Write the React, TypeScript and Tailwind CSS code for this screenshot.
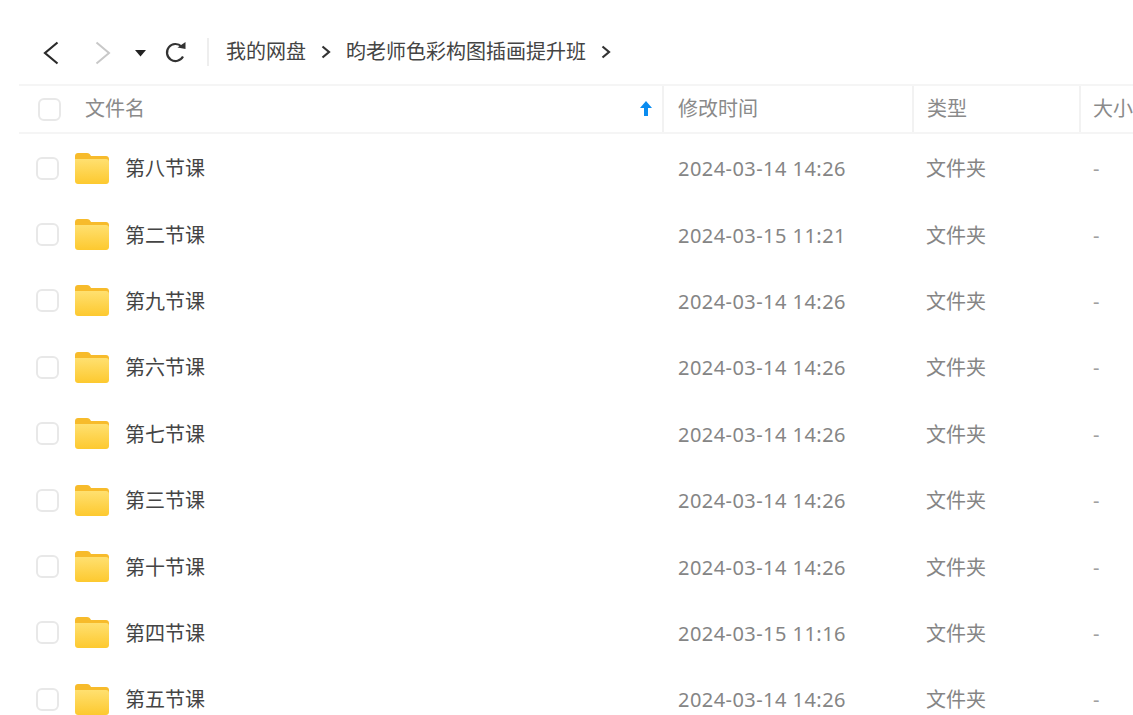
const font = "font-['Noto_Sans','Noto_Sans_CJK_SC',sans-serif]";

const rows = [
  { name: "第八节课", time: "2024-03-14 14:26" },
  { name: "第二节课", time: "2024-03-15 11:21" },
  { name: "第九节课", time: "2024-03-14 14:26" },
  { name: "第六节课", time: "2024-03-14 14:26" },
  { name: "第七节课", time: "2024-03-14 14:26" },
  { name: "第三节课", time: "2024-03-14 14:26" },
  { name: "第十节课", time: "2024-03-14 14:26" },
  { name: "第四节课", time: "2024-03-15 11:16" },
  { name: "第五节课", time: "2024-03-14 14:26" },
];

function FolderIcon() {
  return (
    <svg width="34" height="31" viewBox="0 0 34 31" className="block shrink-0">
      <defs>
        <linearGradient id="folderBody" x1="0" y1="0" x2="0" y2="1">
          <stop offset="0" stopColor="#ffe070" />
          <stop offset="1" stopColor="#fdc92f" />
        </linearGradient>
      </defs>
      <path d="M3 0h9c2 0 3 1 4 3h15c1.700 0 3 1.300 3 3v3H0V3c0-1.700 1.300-3 3-3z" fill="#f7bb2b" />
      <path d="M0 6h31c1.700 0 3 1.300 3 3v19c0 1.700-1.300 3-3 3H3c-1.700 0-3-1.300-3-3z" fill="url(#folderBody)" />
    </svg>
  );
}

function Checkbox() {
  return <span className="h-[23px] w-[23px] shrink-0 rounded-[6px] border-2 border-[#e8e8e8] bg-white" />;
}

function Crumb() {
  return (
    <svg width="10" height="14" viewBox="0 0 10 14" className="block shrink-0">
      <path d="M1.500 1.500L8 7l-6.500 5.500" fill="none" stroke="#333" strokeWidth="2.200" />
    </svg>
  );
}

export default function App() {
  return (
    <div className={`h-[715px] w-[1133px] overflow-hidden bg-white pl-[19px] ${font}`}>
      <div className="flex h-[84px] items-center pl-[24px] pt-[20px]">
        <svg width="16" height="24" viewBox="0 0 16 24" className="mt-[2px] shrink-0">
          <path d="M14.500 1.500L2 12l12.500 10.500" fill="none" stroke="#2a2a2a" strokeWidth="2.200" />
        </svg>
        <svg width="16" height="24" viewBox="0 0 16 24" className="ml-[36px] mt-[2px] shrink-0">
          <path d="M1.500 1.500L14 12 1.500 22.500" fill="none" stroke="#c8c8c8" strokeWidth="2" />
        </svg>
        <svg width="11" height="8" viewBox="0 0 11 8" className="ml-[24px] mt-[2px] shrink-0">
          <path d="M0 1h11L5.500 7.500z" fill="#222" />
        </svg>
        <svg width="22" height="22" viewBox="0 0 22 22" className="ml-[19px] shrink-0">
          <path d="M16.500 5.500A8.500 8.500 0 1 0 18 15.500" fill="none" stroke="#333" strokeWidth="2.200" />
          <path d="M12.500 6.500L20.500 8V1z" fill="#333" />
        </svg>
        <span className="ml-[20px] h-[28px] w-[2px] shrink-0 bg-[#eeeeee]" />
        <span className="ml-[17px] text-[20px] text-[#444]">我的网盘</span>
        <span className="ml-[15px]"><Crumb /></span>
        <span className="ml-[15px] text-[20px] text-[#444]">昀老师色彩构图插画提升班</span>
        <span className="ml-[15px]"><Crumb /></span>
      </div>

      <div className="flex h-[50px] items-center border-y-2 border-[#f5f5f5] text-[20px] text-[#8a8a8a]">
        <div className="flex h-full w-[645px] items-center border-r-2 border-[#f2f2f2] pl-[19px] pr-[10px]">
          <Checkbox />
          <span className="ml-[24px]">文件名</span>
          <svg width="12" height="16" viewBox="0 0 12 16" className="ml-auto">
            <path d="M6 0l6 7H8v8H4V7H0z" fill="#0a8cf0" />
          </svg>
        </div>
        <div className="flex h-full w-[250px] items-center border-r-2 border-[#f2f2f2] pl-[14px]">修改时间</div>
        <div className="flex h-full w-[167px] items-center border-r-2 border-[#f2f2f2] pl-[13px]">类型</div>
        <div className="flex h-full flex-1 items-center overflow-hidden whitespace-nowrap pl-[12px]">大小</div>
      </div>

      <div className="mt-[2px]">
        {rows.map((row) => (
          <div key={row.name} className="flex h-[66.400px] items-center text-[20px]">
            <div className="flex w-[644px] items-center pl-[17px]">
              <span className="mb-[2px] flex"><Checkbox /></span>
              <span className="mb-[2px] ml-[16px]"><FolderIcon /></span>
              <span className="ml-[16px] text-[#444]">{row.name}</span>
            </div>
            <div className="w-[250px] pl-[15px] tracking-[0.45px] text-[#858585]">{row.time}</div>
            <div className="w-[167px] pl-[13px] text-[#858585]">文件夹</div>
            <div className="pl-[13px] text-[#a0a0a0]">-</div>
          </div>
        ))}
      </div>
    </div>
  );
}
